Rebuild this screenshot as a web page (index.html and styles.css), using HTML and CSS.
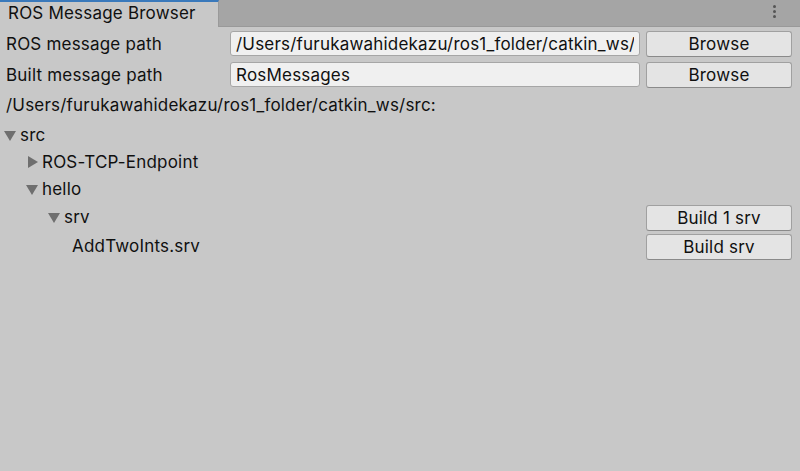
FILE: index.html
```html
<!DOCTYPE html>
<html lang="en">
<head>
    <meta charset="UTF-8">
    <title>ROS Message Browser</title>
    <link rel="stylesheet" href="styles.css">
</head>
<body>
    <div class="window">
        <div class="tabbar">
            <div class="tab">ROS Message Browser</div>
            <div class="menu-dots"><span></span><span></span><span></span></div>
        </div>

        <div class="content">
            <div class="field-row">
                <label class="field-label">ROS message path</label>
                <input class="text-field" type="text" value="/Users/furukawahidekazu/ros1_folder/catkin_ws/src">
                <button class="btn">Browse</button>
            </div>
            <div class="field-row">
                <label class="field-label">Built message path</label>
                <input class="text-field" type="text" value="RosMessages">
                <button class="btn">Browse</button>
            </div>

            <div class="root-path">/Users/furukawahidekazu/ros1_folder/catkin_ws/src:</div>

            <div class="tree">
                <div class="tree-row level-0"><span class="arrow open"></span>src</div>
                <div class="tree-row level-1"><span class="arrow closed"></span>ROS-TCP-Endpoint</div>
                <div class="tree-row level-1"><span class="arrow open"></span>hello</div>
                <div class="tree-row level-2 has-btn">
                    <span class="arrow open"></span><span class="grow">srv</span>
                    <button class="btn small">Build 1 srv</button>
                </div>
                <div class="tree-row level-3 has-btn">
                    <span class="grow">AddTwoInts.srv</span>
                    <button class="btn small">Build srv</button>
                </div>
            </div>
        </div>
    </div>
</body>
</html>
```

FILE: styles.css
```css
* {
    box-sizing: border-box;
    margin: 0;
    padding: 0;
}

body {
    width: 800px;
    height: 471px;
    background: #c8c8c8;
    font-family: 'Inter', 'Liberation Sans', sans-serif;
    font-size: 17px;
    letter-spacing: 0.2px;
    color: #101010;
    overflow: hidden;
}

.window {
    height: 100%;
}

.tabbar {
    height: 27px;
    background: #a5a5a5;
    border-bottom: 1px solid #999;
    display: flex;
    align-items: flex-start;
    justify-content: space-between;
}

.tab {
    width: 219px;
    height: 27px;
    background: #c8c8c8;
    border-top: 2px solid #3a79bb;
    border-right: 1px solid #9a9a9a;
    padding: 1px 0 0 8px;
    line-height: 21px;
}

.menu-dots {
    display: flex;
    flex-direction: column;
    gap: 2px;
    padding: 5px 24px 0 0;
}

.menu-dots span {
    width: 3px;
    height: 3px;
    border-radius: 50%;
    background: #555;
}

.content {
    padding: 1px 8px 0 6px;
}

.field-row {
    display: flex;
    align-items: center;
    height: 31px;
}

.field-label {
    width: 224px;
    flex-shrink: 0;
}

.text-field {
    width: 410px;
    height: 25px;
    margin-right: 6px;
    padding: 0 5px;
    font: inherit;
    letter-spacing: inherit;
    color: #101010;
    background: #f0f0f0;
    border: 1px solid #a6a6a6;
    border-radius: 3px;
    outline: none;
}

.btn {
    flex: 1;
    height: 26px;
    font: inherit;
    letter-spacing: inherit;
    color: #101010;
    background: #e4e4e4;
    border: 1px solid #a0a0a0;
    border-bottom-color: #8a8a8a;
    border-radius: 3px;
}

.root-path {
    height: 29px;
    line-height: 29px;
    margin-top: 1px;
}

.tree {
    margin-top: 1px;
}

.tree-row {
    display: flex;
    align-items: center;
    height: 27px;
}

.tree-row.has-btn {
    height: 29px;
}

.tree-row.level-0 { padding-left: 0; }
.tree-row.level-1 { padding-left: 22px; }
.tree-row.level-2 { padding-left: 44px; }
.tree-row.level-3 { padding-left: 66px; }

.tree-row .grow {
    flex: 1;
}

.arrow {
    width: 15px;
    height: 14px;
    margin-left: -2px;
    margin-right: 1px;
    position: relative;
}

.arrow.open::before {
    content: '';
    position: absolute;
    left: 0;
    top: 3px;
    border-left: 6px solid transparent;
    border-right: 6px solid transparent;
    border-top: 10px solid #6f6f6f;
}

.arrow.closed::before {
    content: '';
    position: absolute;
    left: 2px;
    top: 1px;
    border-top: 6px solid transparent;
    border-bottom: 6px solid transparent;
    border-left: 10px solid #6f6f6f;
}

.btn.small {
    flex: 0 0 146px;
    height: 26px;
    margin-top: 3px;
}
```
